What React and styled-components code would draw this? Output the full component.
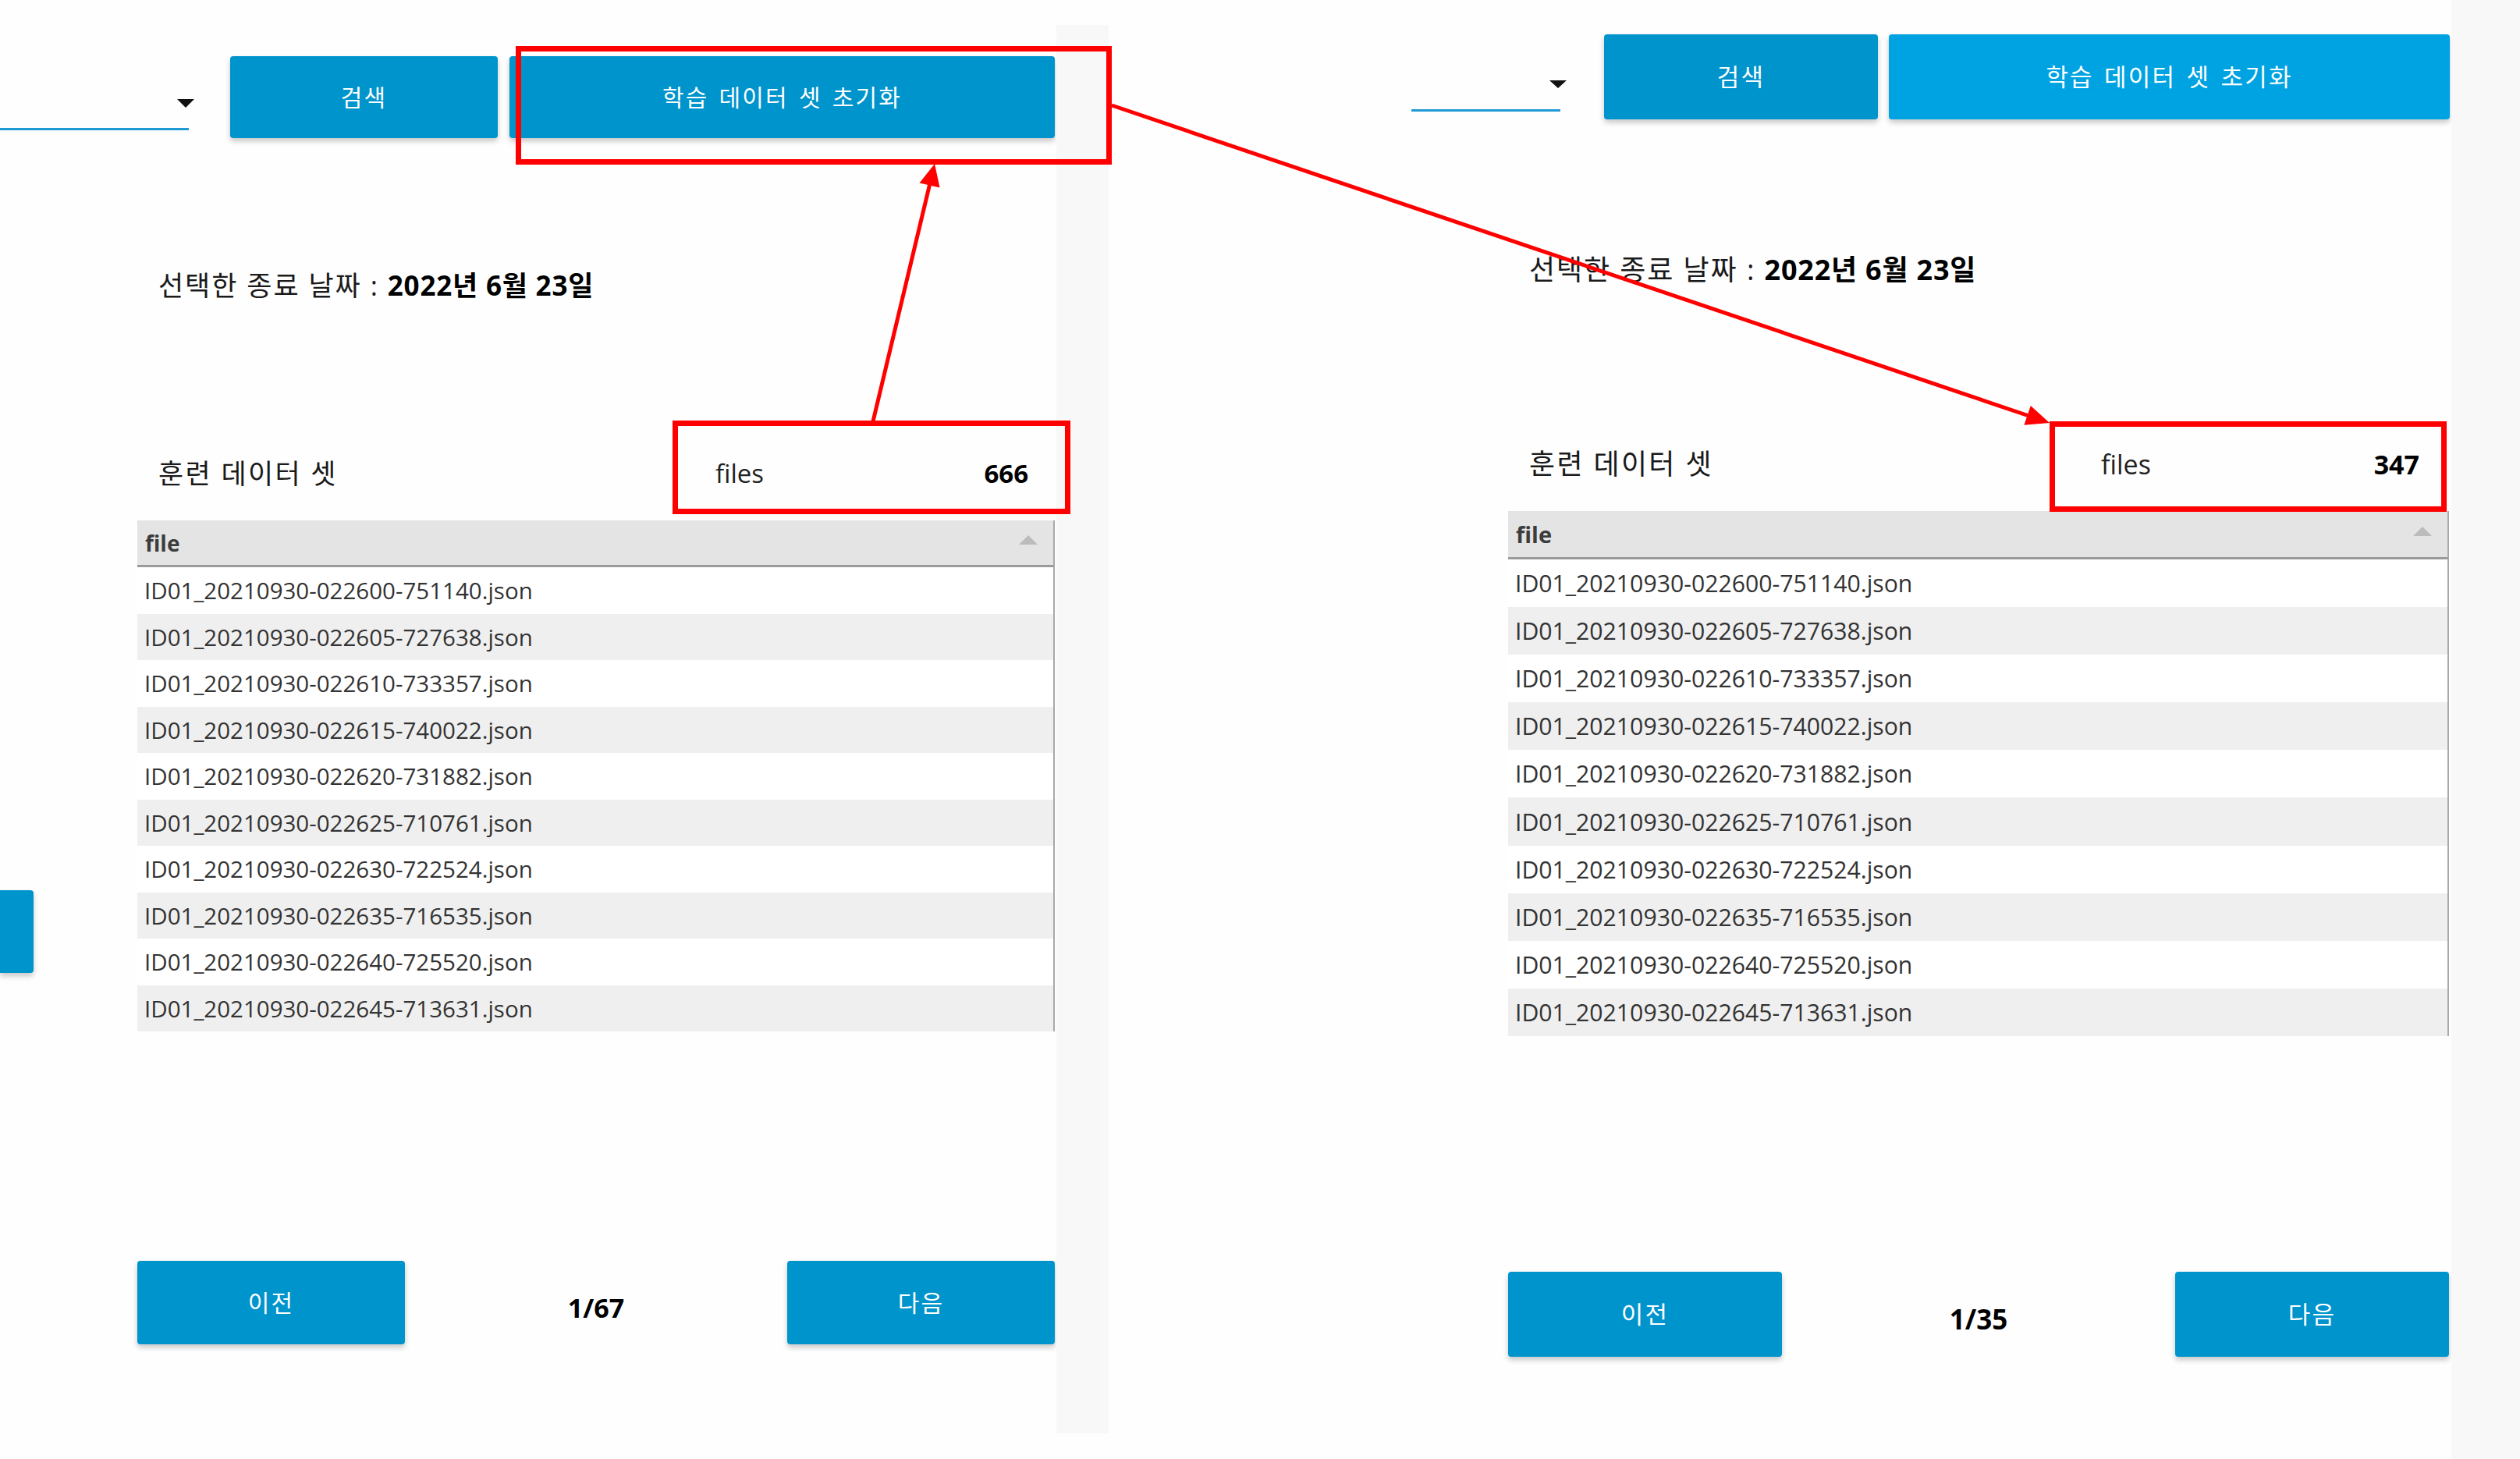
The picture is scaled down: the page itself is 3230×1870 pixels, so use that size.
import React from 'react';
import styled, { createGlobalStyle } from 'styled-components';

const GlobalStyle = createGlobalStyle`
  html, body { margin: 0; padding: 0; background: #fefefe; }
  body { font-family: "Open Sans", "Noto Sans CJK KR", sans-serif; }
  * { box-sizing: border-box; }
`;

const FONT = `"Open Sans", "Noto Sans CJK KR", sans-serif`;

const Page = styled.div`
  position: relative;
  width: 3230px;
  height: 1870px;
  display: flex;
  background: #fefefe;
  overflow: hidden;
  font-family: ${FONT};
`;

const Shot = styled.section`
  flex: none;
  width: ${(p) => p.$m.width}px;
  height: 100%;
  display: flex;
  flex-direction: column;
  background: #fefefe;
`;

const Gutter = styled.div`
  flex: none;
  width: 67px;
  height: 100%;
  display: flex;
  flex-direction: column;
  padding: 32px 0 33px;
`;

const GutterFill = styled.div`
  flex: 1;
  background: #f8f8f8;
`;

const EdgeStrip = styled.div`
  flex: 1;
  height: 100%;
  background: #f8f8f8;
`;

const Toolbar = styled.div`
  display: flex;
  justify-content: flex-end;
  align-items: stretch;
  padding-top: ${(p) => p.$m.top}px;
  padding-right: ${(p) => p.$m.tbPr}px;
  height: ${(p) => p.$m.top + p.$m.btnH}px;
  flex: none;
`;

const Dropdown = styled.div`
  width: ${(p) => p.$m.ddW}px;
  margin-right: ${(p) => p.$m.ddGap}px;
  display: flex;
  flex-direction: column;
  justify-content: flex-end;
  padding-bottom: 10px;
`;

const Caret = styled.span`
  align-self: flex-end;
  width: 0;
  height: 0;
  border-left: ${(p) => p.$m.arrowW / 2}px solid transparent;
  border-right: ${(p) => p.$m.arrowW / 2}px solid transparent;
  border-top: ${(p) => p.$m.arrowH}px solid #111;
`;

const Underline = styled.span`
  display: block;
  height: 3px;
  margin-top: ${(p) => p.$m.ulGap}px;
  margin-right: ${(p) => p.$m.ulInset}px;
  background: #1f9ad5;
`;

const Button = styled.button`
  flex: none;
  width: ${(p) => p.$w}px;
  height: ${(p) => p.$h}px;
  margin-left: ${(p) => p.$ml || 0}px;
  border: none;
  border-radius: 4px;
  background: ${(p) => (p.$active ? '#00a3e2' : '#0094cc')};
  color: #ffffff;
  font-family: ${FONT};
  font-size: ${(p) => p.$fs}px;
  letter-spacing: 2.2px;
  word-spacing: 3px;
  line-height: 1;
  box-shadow: 0 4px 7px rgba(0, 0, 0, 0.22);
  padding: 0;
  cursor: pointer;
`;

const Body = styled.div`
  flex: 1;
  display: flex;
`;

const Side = styled.div`
  flex: none;
  width: ${(p) => p.$m.side}px;
  display: flex;
  flex-direction: column;
`;

const SideTab = styled.div`
  width: 43px;
  height: 106px;
  margin-top: 964px;
  background: #0094cc;
  border-radius: 0 4px 4px 0;
  box-shadow: 0 4px 7px rgba(0, 0, 0, 0.22);
`;

const Main = styled.div`
  flex: 1;
  display: flex;
  flex-direction: column;
  padding-right: ${(p) => p.$m.mainPr}px;
`;

const DateLine = styled.div`
  margin-top: ${(p) => p.$m.dateTop}px;
  padding-left: ${(p) => p.$m.dateInset}px;
  height: 40px;
  line-height: 40px;
  font-size: ${(p) => p.$m.dateFs}px;
  letter-spacing: 1.9px;
  color: #1a1a1a;
  white-space: nowrap;
  b {
    font-weight: 700;
    color: #000;
    letter-spacing: 0.8px;
  }
`;

const DatasetRow = styled.div`
  margin-top: ${(p) => p.$m.rowTop}px;
  height: 120px;
  display: flex;
  align-items: center;
  padding-left: ${(p) => p.$m.dateInset}px;
  padding-top: 8px;
`;

const DatasetLabel = styled.div`
  font-size: ${(p) => p.$m.dateFs}px;
  letter-spacing: 2.3px;
  line-height: 40px;
  color: #1a1a1a;
  white-space: nowrap;
`;

const Stat = styled.div`
  margin-left: auto;
  margin-right: ${(p) => p.$m.statMr}px;
  width: ${(p) => p.$m.statW}px;
  display: flex;
  justify-content: space-between;
  align-items: baseline;
  font-size: ${(p) => p.$m.statFs}px;
  line-height: 40px;
  color: #222;
`;

const StatValue = styled.span`
  font-weight: 700;
  color: #000;
`;

const Table = styled.div`
  margin-top: 4px;
  display: flex;
  flex-direction: column;
  border-right: 2px solid #a8a8a8;
`;

const HeadRow = styled.div`
  height: ${(p) => p.$m.headH}px;
  display: flex;
  align-items: center;
  justify-content: space-between;
  padding: 0 20px 0 10px;
  background: #e4e4e4;
  border-bottom: 3px solid #9a9a9a;
  font-size: ${(p) => p.$m.headFs}px;
  font-weight: 700;
  color: #3c3c3c;
`;

const SortMark = styled.span`
  width: 0;
  height: 0;
  border-left: 12px solid transparent;
  border-right: 12px solid transparent;
  border-bottom: 12px solid #bcbcbc;
  margin-top: -8px;
`;

const Row = styled.div`
  height: ${(p) => p.$m.rowH}px;
  display: flex;
  align-items: center;
  padding-left: 9px;
  background: ${(p) => (p.$odd ? '#efefef' : '#ffffff')};
  font-size: ${(p) => p.$m.cellFs}px;
  color: #333;
  white-space: nowrap;
`;

const Pager = styled.div`
  margin-top: ${(p) => p.$m.pagerTop}px;
  display: flex;
  justify-content: space-between;
  align-items: center;
`;

const PageNum = styled.div`
  font-size: ${(p) => p.$m.pageFs}px;
  font-weight: 700;
  color: #000;
  padding-top: 12px;
`;

const Overlay = styled.svg`
  position: absolute;
  left: 0;
  top: 0;
  width: 3230px;
  height: 1870px;
  pointer-events: none;
`;

const FILES = [
  'ID01_20210930-022600-751140.json',
  'ID01_20210930-022605-727638.json',
  'ID01_20210930-022610-733357.json',
  'ID01_20210930-022615-740022.json',
  'ID01_20210930-022620-731882.json',
  'ID01_20210930-022625-710761.json',
  'ID01_20210930-022630-722524.json',
  'ID01_20210930-022635-716535.json',
  'ID01_20210930-022640-725520.json',
  'ID01_20210930-022645-713631.json',
];

const LEFT = {
  width: 1354, side: 176, mainPr: 2, tbPr: 2,
  top: 72, btnH: 105, ddW: 249, ddGap: 46, arrowW: 22, arrowH: 11, ulGap: 26, ulInset: 7,
  searchW: 343, resetW: 699, btnGap: 15, resetActive: false, btnFs: 30,
  dateTop: 169, dateFs: 35, dateInset: 27,
  rowTop: 157, statW: 401, statMr: 34, statFs: 33,
  headH: 60, rowH: 59.5, cellFs: 29.5, headFs: 28,
  pagerTop: 294, pagerBtnW: 343, pagerBtnH: 107, pageFs: 34,
  page: '1/67', count: '666', sideTab: true,
};

const RIGHT = {
  width: 1721, side: 512, mainPr: 3, tbPr: 2,
  top: 44, btnH: 109, ddW: 199, ddGap: 48, arrowW: 23, arrowH: 10, ulGap: 27, ulInset: 8,
  searchW: 351, resetW: 719, btnGap: 14, resetActive: true, btnFs: 31,
  dateTop: 173, dateFs: 36, dateInset: 27,
  rowTop: 165, statW: 408, statMr: 38, statFs: 34,
  headH: 62, rowH: 61.1, cellFs: 30.2, headFs: 29,
  pagerTop: 302, pagerBtnW: 351, pagerBtnH: 109, pageFs: 35,
  page: '1/35', count: '347', sideTab: false,
};

function Panel({ m }) {
  return (
    <Shot $m={m}>
      <Toolbar $m={m}>
        <Dropdown $m={m}>
          <Caret $m={m} />
          <Underline $m={m} />
        </Dropdown>
        <Button $w={m.searchW} $h={m.btnH} $fs={m.btnFs}>검색</Button>
        <Button $w={m.resetW} $h={m.btnH} $fs={m.btnFs} $ml={m.btnGap} $active={m.resetActive}>
          학습 데이터 셋 초기화
        </Button>
      </Toolbar>
      <Body>
        <Side $m={m}>{m.sideTab && <SideTab />}</Side>
        <Main $m={m}>
          <DateLine $m={m}>
            선택한 종료 날짜 : <b>2022년 6월 23일</b>
          </DateLine>
          <DatasetRow $m={m}>
            <DatasetLabel $m={m}>훈련 데이터 셋</DatasetLabel>
            <Stat $m={m}>
              <span>files</span>
              <StatValue>{m.count}</StatValue>
            </Stat>
          </DatasetRow>
          <Table>
            <HeadRow $m={m}>
              <span>file</span>
              <SortMark />
            </HeadRow>
            {FILES.map((f, i) => (
              <Row key={f} $m={m} $odd={i % 2 === 1}>{f}</Row>
            ))}
          </Table>
          <Pager $m={m}>
            <Button $w={m.pagerBtnW} $h={m.pagerBtnH} $fs={m.btnFs}>이전</Button>
            <PageNum $m={m}>{m.page}</PageNum>
            <Button $w={m.pagerBtnW} $h={m.pagerBtnH} $fs={m.btnFs}>다음</Button>
          </Pager>
        </Main>
      </Body>
    </Shot>
  );
}

function Annotations() {
  const red = '#ff0000';
  return (
    <Overlay viewBox="0 0 3230 1870">
      <rect x="664.5" y="62.5" width="757" height="145" fill="none" stroke={red} strokeWidth="7" />
      <rect x="865.5" y="542.5" width="503" height="113" fill="none" stroke={red} strokeWidth="7" />
      <rect x="2630.5" y="543.5" width="502" height="109" fill="none" stroke={red} strokeWidth="7" />
      <line x1="1119" y1="540" x2="1191.5" y2="237" stroke={red} strokeWidth="5" />
      <polygon points="1198,210 1204.5,240.5 1178.5,234.5" fill={red} />
      <line x1="1425" y1="135" x2="2599" y2="532.5" stroke={red} strokeWidth="5" />
      <polygon points="2627,542 2594.4,544.7 2602.8,520.1" fill={red} />
    </Overlay>
  );
}

export default function App() {
  return (
    <>
      <GlobalStyle />
      <Page>
        <Panel m={LEFT} />
        <Gutter>
          <GutterFill />
        </Gutter>
        <Panel m={RIGHT} />
        <EdgeStrip />
        <Annotations />
      </Page>
    </>
  );
}
